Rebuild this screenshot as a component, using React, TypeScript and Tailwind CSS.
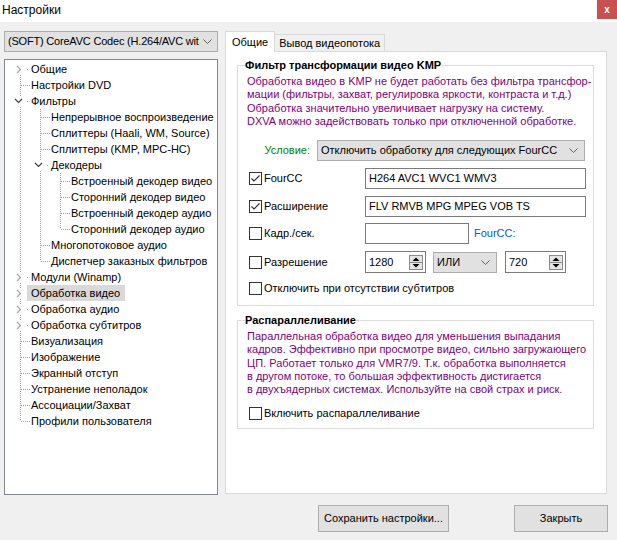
import React from "react";

type TreeNode = { t: string; open?: boolean; shut?: boolean; sel?: boolean; kids?: TreeNode[] };

const tree: TreeNode[] = [
  { t: "Общие", shut: true },
  { t: "Настройки DVD" },
  {
    t: "Фильтры",
    open: true,
    kids: [
      { t: "Непрерывное воспроизведение" },
      { t: "Сплиттеры (Haali, WM, Source)" },
      { t: "Сплиттеры (KMP, MPC-HC)" },
      {
        t: "Декодеры",
        open: true,
        kids: [
          { t: "Встроенный декодер видео" },
          { t: "Сторонний декодер видео" },
          { t: "Встроенный декодер аудио" },
          { t: "Сторонний декодер аудио" },
        ],
      },
      { t: "Многопотоковое аудио" },
      { t: "Диспетчер заказных фильтров" },
    ],
  },
  { t: "Модули (Winamp)", shut: true },
  { t: "Обработка видео", shut: true, sel: true },
  { t: "Обработка аудио", shut: true },
  { t: "Обработка субтитров", shut: true },
  { t: "Визуализация" },
  { t: "Изображение" },
  { t: "Экранный отступ" },
  { t: "Устранение неполадок" },
  { t: "Ассоциации/Захват" },
  { t: "Профили пользователя" },
];

type Row = { node: TreeNode; rails: boolean[]; first: boolean; last: boolean };

const flatten = (nodes: TreeNode[], rails: boolean[], root: boolean): Row[] =>
  nodes.flatMap((node, i) => {
    const last = i === nodes.length - 1;
    const row: Row = { node, rails, first: root && i === 0, last };
    return node.kids ? [row, ...flatten(node.kids, [...rails, !last], false)] : [row];
  });

const dots = { stroke: "#a0a0a0", strokeWidth: 1, strokeDasharray: "1 1" };

const Rail = ({ on }: { on: boolean }) => (
  <svg width="20" height="16" className="shrink-0">
    {on && <line x1="10.5" y1="0" x2="10.5" y2="16" {...dots} />}
  </svg>
);

const Elbow = ({ row }: { row: Row }) => {
  const { node, first, last } = row;
  const kids = node.kids || node.shut;
  if (kids) {
    return (
      <svg width="20" height="16" className="shrink-0">
        {!first && <line x1="10.5" y1="0" x2="10.5" y2="3" {...dots} />}
        {!last && <line x1="10.5" y1="14" x2="10.5" y2="16" {...dots} />}
        <rect x="17" y="8" width="1" height="1" fill="#a0a0a0" />
        {node.open ? (
          <path d="M5 6 L8.5 9.5 L12 6" fill="none" stroke="#404040" strokeWidth="1.2" />
        ) : (
          <path d="M7 5 L10.5 8.5 L7 12" fill="none" stroke="#a6a6a6" strokeWidth="1.2" />
        )}
      </svg>
    );
  }
  return (
    <svg width="20" height="16" className="shrink-0">
      {!first && <line x1="10.5" y1="0" x2="10.5" y2="8" {...dots} />}
      {!last && <line x1="10.5" y1="8" x2="10.5" y2="16" {...dots} />}
      <line x1="11" y1="8.5" x2="20" y2="8.5" {...dots} />
    </svg>
  );
};

const Tree = () => (
  <div className="h-[436px] border border-[#828790] bg-white pl-[5px] pt-[1px] overflow-hidden">
    {flatten(tree, [], true).map((row) => (
      <div key={row.node.t} className="flex h-4 items-center">
        {row.rails.map((on, i) => (
          <Rail key={i} on={on} />
        ))}
        <Elbow row={row} />
        <span
          className={`-ml-[3px] pl-[4px] pr-[5px] leading-4 whitespace-nowrap ${
            row.node.sel ? "bg-[#d9d9d9]" : ""
          }`}
        >
          {row.node.t}
        </span>
      </div>
    ))}
  </div>
);

const Chevron = () => (
  <svg width="9" height="6" className="shrink-0">
    <path d="M0.5 0.5 L4.5 4.5 L8.5 0.5" fill="none" stroke="#606060" strokeWidth="1" />
  </svg>
);

const Combo = ({ text, className }: { text: string; className: string }) => (
  <div
    className={`flex items-center justify-between gap-[4px] border border-[#adadad] bg-[#e1e1e1] pl-[3px] pr-[6px] ${className}`}
  >
    <span className="whitespace-nowrap">{text}</span>
    <Chevron />
  </div>
);

const Check = ({ on }: { on?: boolean }) => (
  <svg width="13" height="13" className="shrink-0">
    <rect x="0.5" y="0.5" width="12" height="12" fill="white" stroke="#333333" />
    {on && <path d="M2.5 6.5 L5 9 L10.5 3.5" fill="none" stroke="#333333" strokeWidth="1.2" />}
  </svg>
);

const CheckLabel = ({ on, text }: { on?: boolean; text: string }) => (
  <div className="flex items-center gap-[2px] ml-[2px] whitespace-nowrap">
    <Check on={on} />
    <span>{text}</span>
  </div>
);

const TextBox = ({ text, className }: { text?: string; className: string }) => (
  <div className={`flex items-center border border-[#7a7a7a] bg-white pl-[3px] ${className}`}>
    {text}
  </div>
);

const Spinner = () => (
  <svg width="14" height="15" className="shrink-0">
    <rect x="0.5" y="0.5" width="13" height="14" fill="#e5e5e5" stroke="#8a8a8a" />
    <line x1="0.5" y1="7.5" x2="13.5" y2="7.5" stroke="#8a8a8a" />
    <path d="M3.5 6 L7 2.5 L10.5 6 Z" fill="#000" />
    <path d="M3.5 9 L7 12.5 L10.5 9 Z" fill="#000" />
  </svg>
);

const SpinBox = ({ value }: { value: string }) => (
  <div className="flex h-[22px] w-[61px] items-center justify-between border border-[#7a7a7a] bg-white pl-[3px] pr-[2px]">
    <span>{value}</span>
    <Spinner />
  </div>
);

const Group = ({ title, children, className }: { title: string; children: React.ReactNode; className: string }) => (
  <fieldset className={`w-[357px] min-w-0 border border-[#dcdcdc] pl-[9px] pr-[7px] ${className}`}>
    <legend className="-ml-[2px] font-bold leading-[13px]">{title}</legend>
    {children}
  </fieldset>
);

const Button = ({ text, className }: { text: string; className: string }) => (
  <button className={`h-[27px] border border-[#adadad] bg-[#e1e1e1] ${className}`}>{text}</button>
);

export default function App() {
  return (
    <div className="h-[540px] w-[617px] overflow-hidden bg-[#f0f0f0] font-['Liberation_Sans',Arial,sans-serif] text-[11px] text-black">
      <div className="flex h-[22px] items-start justify-between bg-white">
        <span className="pl-[2px] pt-[2px] text-[12px] leading-[16px]">Настройки</span>
        <div className="flex h-[19px] w-[20px] items-center justify-center bg-[#c75050] text-[10px] font-bold leading-none text-white">
          x
        </div>
      </div>

      <div className="flex pt-[9px]">
        <div className="ml-[4px] w-[214px]">
          <Combo text="(SOFT) CoreAVC Codec (H.264/AVC wit" className="h-[21px] tracking-[-0.2px]" />
          <div className="mt-[7px]">
            <Tree />
          </div>
        </div>

        <div className="ml-[7px] w-[382px]">
          <div className="flex h-[20px] items-end">
            <div className="relative z-10 -mb-px flex h-[21px] items-center border border-b-0 border-[#d9d9d9] bg-white px-[6px]">
              Общие
            </div>
            <div className="flex h-[17px] items-center border border-b-0 border-l-0 border-[#d9d9d9] px-[4px]">
              Вывод видеопотока
            </div>
          </div>
          <div className="h-[443px] border border-[#d9d9d9] bg-white pl-[11px]">
            <Group title="Фильтр трансформации видео KMP" className="mt-[7px] pt-[3px] pb-[10px]">
              <div className="whitespace-nowrap leading-[13.3px] text-[#800080]">
                <p>Обработка видео в KMP не будет работать без фильтра трансфор-</p>
                <p>мации (фильтры, захват, регулировка яркости, контраста и т.д.)</p>
                <p>Обработка значительно увеличивает нагрузку на систему.</p>
                <p>DXVA можно задействовать только при отключенной обработке.</p>
              </div>
              <div className="mt-[12px] flex h-[21px] items-center">
                <span className="w-[63px] text-right text-[#008000]">Условие:</span>
                <Combo text="Отключить обработку для следующих FourCC" className="ml-[7px] h-[21px] w-[268px]" />
              </div>
              <div className="mt-[7px] flex h-[21px] items-center">
                <div className="w-[118px]">
                  <CheckLabel on text="FourCC" />
                </div>
                <TextBox text="H264 AVC1 WVC1 WMV3" className="h-[21px] w-[221px]" />
              </div>
              <div className="mt-[7px] flex h-[21px] items-center">
                <div className="w-[118px]">
                  <CheckLabel on text="Расширение" />
                </div>
                <TextBox text="FLV RMVB MPG MPEG VOB TS" className="h-[21px] w-[221px]" />
              </div>
              <div className="mt-[6px] flex h-[21px] items-center">
                <div className="w-[118px]">
                  <CheckLabel text="Кадр./сек." />
                </div>
                <TextBox className="h-[21px] w-[104px]" />
                <span className="ml-[5px] text-[#0060c0]">FourCC:</span>
              </div>
              <div className="mt-[7px] flex h-[22px] items-center">
                <div className="w-[118px]">
                  <CheckLabel text="Разрешение" />
                </div>
                <SpinBox value="1280" />
                <Combo text="ИЛИ" className="ml-[7px] h-[21px] w-[64px] self-end" />
                <div className="ml-[8px]">
                  <SpinBox value="720" />
                </div>
              </div>
              <div className="mt-[9px] flex h-[13px] items-center">
                <CheckLabel text="Отключить при отсутствии субтитров" />
              </div>
            </Group>

            <Group title="Распараллеливание" className="mt-[8px] pt-[3px] pb-[8px]">
              <div className="whitespace-nowrap leading-[13.3px] text-[#800080]">
                <p>Параллельная обработка видео для уменьшения выпадания</p>
                <p>кадров. Эффективно при просмотре видео, сильно загружающего</p>
                <p>ЦП. Работает только для VMR7/9. Т.к. обработка выполняется</p>
                <p>в другом потоке, то большая эффективность дистигается</p>
                <p>в двухъядерных системах. Используйте на свой страх и риск.</p>
              </div>
              <div className="mt-[10px] flex h-[13px] items-center">
                <CheckLabel text="Включить распараллеливание" />
              </div>
            </Group>
          </div>
        </div>
      </div>

      <div className="mt-[10px] flex">
        <Button text="Сохранить настройки..." className="ml-[318px] w-[131px]" />
        <Button text="Закрыть" className="ml-[65px] w-[94px]" />
      </div>
    </div>
  );
}
